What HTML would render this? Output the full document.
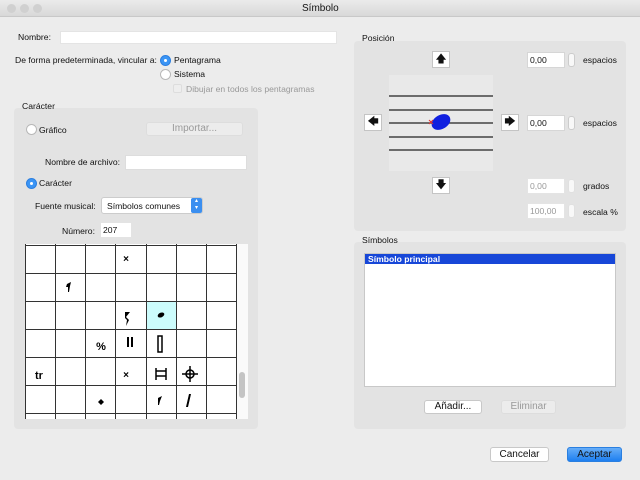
<!DOCTYPE html>
<html><head><style>
*{margin:0;padding:0;box-sizing:border-box}
body{width:640px;height:480px;background:#ececec;font-family:"Liberation Sans",sans-serif;font-size:8.6px;color:#111;position:relative;overflow:hidden}
.a{position:absolute}
.t{position:absolute;white-space:nowrap;line-height:10px}
.inp{position:absolute;background:#fff;border:1px solid #d6d6d6}
.rad{position:absolute;width:11px;height:11px;border-radius:50%;background:#fff;border:1px solid #b8b8b8}
.rad.on{background:#3b95f5;border-color:#2c7fe0}
.rad.on:after{content:"";position:absolute;left:3px;top:3px;width:3px;height:3px;border-radius:50%;background:#fff}
.btn{position:absolute;background:#fff;border:1px solid #c8c8c8;border-radius:3px;text-align:center;line-height:12px;font-size:10px}
.box{position:absolute;background:#e3e3e3;border-radius:4px}
.ab{position:absolute;width:18px;height:17px;background:#fff;border:1px solid #c4c4c4;font-size:11px;text-align:center;line-height:15px}
.step{position:absolute;width:7px;height:14px;border:1px solid #ccc;border-radius:3px;background:#f8f8f8}
.g{color:#999}
</style></head><body>
<div class="a" style="left:0;top:0;width:640px;height:17px;background:linear-gradient(#ebebeb,#d8d8d8);border-bottom:1px solid #c8c8c8"></div>
<div class="a" style="left:7px;top:4px;width:9px;height:9px;border-radius:50%;background:#d0d0d0"></div>
<div class="a" style="left:20px;top:4px;width:9px;height:9px;border-radius:50%;background:#d0d0d0"></div>
<div class="a" style="left:33px;top:4px;width:9px;height:9px;border-radius:50%;background:#d0d0d0"></div>
<div class="t" style="left:302px;top:4px;font-size:10px">Símbolo</div>

<div class="t" style="left:18px;top:32px">Nombre:</div>
<div class="inp" style="left:60px;top:31px;width:277px;height:13px;border-color:#e4e4e4"></div>
<div class="t" style="left:15px;top:55px">De forma predeterminada, vincular a:</div>
<div class="rad on" style="left:160px;top:55px"></div><div class="t" style="left:174px;top:55px">Pentagrama</div>
<div class="rad" style="left:160px;top:69px"></div><div class="t" style="left:174px;top:69px">Sistema</div>
<div class="a" style="left:173px;top:84px;width:9px;height:9px;border:1px solid #ddd;border-radius:2px;background:#eee"></div>
<div class="t g" style="left:186px;top:84px">Dibujar en todos los pentagramas</div>

<div class="box" style="left:14px;top:108px;width:244px;height:321px"></div>
<div class="t" style="left:22px;top:101px">Carácter</div>
<div class="rad" style="left:26px;top:124px"></div><div class="t" style="left:39px;top:125px">Gráfico</div>
<div class="btn g" style="left:146px;top:122px;width:97px;height:14px;background:#ececec;border-color:#ddd">Importar...</div>
<div class="t" style="left:45px;top:157px">Nombre de archivo:</div>
<div class="inp" style="left:125px;top:155px;width:122px;height:15px;border-color:#ddd"></div>
<div class="rad on" style="left:26px;top:178px"></div><div class="t" style="left:39px;top:178px">Carácter</div>
<div class="t" style="left:35px;top:201px">Fuente musical:</div>
<div class="a" style="left:101px;top:197px;width:102px;height:17px;background:#fff;border:1px solid #ccc;border-radius:3px"></div>
<div class="t" style="left:107px;top:201px">Símbolos comunes</div>
<div class="a" style="left:191px;top:198px;width:11px;height:15px;background:#3b8ff0;border-radius:2px;color:#fff;font-size:6px;line-height:7px;text-align:center">▴<br>▾</div>
<div class="t" style="left:62px;top:226px">Número:</div>
<div class="inp" style="left:101px;top:223px;width:30px;height:14px;border:none;padding-left:2px;line-height:14px">207</div>

<svg class="a" style="left:25px;top:244px" width="223" height="175">
<rect x="0" y="0" width="223" height="175" fill="#fff"/>
<rect x="211" y="0" width="12" height="175" fill="#fafafa"/>
<rect x="214" y="128" width="6" height="26" rx="3" fill="#c4c4c4"/>
<rect x="121" y="57" width="30" height="28" fill="#ccfcfc"/>
<g stroke="#333" stroke-width="1">
<path d="M0.5 0V175M30.5 0V175M60.5 0V175M90.5 0V175M121.5 0V175M151.5 0V175M181.5 0V175M211.5 0V175"/>
<path d="M0 1.5H211M0 29.5H211M0 57.5H211M0 85.5H211M0 113.5H211M0 141.5H211M0 169.5H211"/>
</g>
<g fill="#000" font-family="Liberation Sans" font-weight="bold">
<text x="101" y="18" font-size="10" text-anchor="middle">×</text>
<path d="M42 40 L46 38 L45 42 L44 48 L43 48 L43 43 L41 43Z"/>
<path d="M100 68 L105 68 L101 73 L104 76 L101 82 L102 76 L100 74Z"/>
<ellipse cx="136" cy="71" rx="3.5" ry="2.3" transform="rotate(-25 136 71)"/>
<text x="76" y="106" font-size="11" text-anchor="middle">%</text>
<rect x="102" y="93" width="2" height="10"/><rect x="106" y="93" width="2" height="10"/>
<rect x="133" y="92" width="4" height="16" fill="none" stroke="#000" stroke-width="1.5"/>
<text x="101" y="134" font-size="10" text-anchor="middle">×</text>
<path d="M131 124V136M141 124V136M131 127H141M131 132H141" stroke="#000" stroke-width="1.5" fill="none"/>
<circle cx="165" cy="130" r="4" fill="none" stroke="#000" stroke-width="1.5"/><path d="M165 122V138M157 130H173" stroke="#000" stroke-width="1.5"/>
<text x="14" y="135" font-size="11" text-anchor="middle">tr</text>
<path d="M73 158 L76 155 L79 158 L76 161Z"/>
<path d="M133 154 L137 152 L135 157 L134 161 L133 161 L133 157Z"/>
<path d="M164 150 L166 150 L163 163 L161 163Z"/>
</g>
</svg>

<div class="box" style="left:354px;top:41px;width:272px;height:190px"></div>
<div class="t" style="left:362px;top:33px">Posición</div>
<div class="ab" style="left:432px;top:51px">🡅</div>
<div class="ab" style="left:364px;top:114px">🡄</div>
<div class="ab" style="left:501px;top:114px">🡆</div>
<div class="ab" style="left:432px;top:177px">🡇</div>
<svg class="a" style="left:389px;top:75px" width="104" height="96">
<rect width="104" height="96" fill="#e9e9e9"/>
<g stroke="#222" stroke-width="1.3"><path d="M0 21H104M0 35H104M0 48H104M0 62H104M0 75H104"/></g>
<ellipse cx="52" cy="47" rx="10" ry="7" transform="rotate(-30 52 47)" fill="#1020e0"/>
<path d="M40 45L44 49M44 45L40 49" stroke="#e03030" stroke-width="1"/>
</svg>
<div class="inp" style="left:527px;top:52px;width:38px;height:16px;padding-left:2px;line-height:14px">0,00</div><div class="step" style="left:568px;top:53px"></div><div class="t" style="left:583px;top:55px">espacios</div>
<div class="inp" style="left:527px;top:115px;width:38px;height:16px;padding-left:2px;line-height:14px">0,00</div><div class="step" style="left:568px;top:116px"></div><div class="t" style="left:583px;top:118px">espacios</div>
<div class="inp g" style="left:527px;top:178px;width:38px;height:16px;padding-left:2px;line-height:14px;border-color:#e4e4e4">0,00</div><div class="step" style="left:568px;top:179px;border-color:#e0e0e0"></div><div class="t" style="left:583px;top:181px">grados</div>
<div class="inp g" style="left:527px;top:203px;width:38px;height:16px;padding-left:2px;line-height:14px;border-color:#e4e4e4">100,00</div><div class="step" style="left:568px;top:204px;border-color:#e0e0e0"></div><div class="t" style="left:583px;top:207px">escala %</div>

<div class="box" style="left:354px;top:242px;width:272px;height:187px"></div>
<div class="t" style="left:362px;top:235px">Símbolos</div>
<div class="inp" style="left:364px;top:253px;width:252px;height:134px;border-color:#c8c8c8"></div>
<div class="a" style="left:365px;top:254px;width:250px;height:10px;background:#1747d8"></div>
<div class="t" style="left:368px;top:254px;color:#fff;font-weight:bold">Símbolo principal</div>
<div class="btn" style="left:424px;top:400px;width:58px;height:14px">Añadir...</div>
<div class="btn g" style="left:501px;top:400px;width:55px;height:14px;background:#ececec;border-color:#ddd">Eliminar</div>

<div class="btn" style="left:490px;top:447px;width:59px;height:15px;line-height:13px">Cancelar</div>
<div class="btn" style="left:567px;top:447px;width:55px;height:15px;line-height:13px;background:linear-gradient(#66adf8,#1e7ff0);border-color:#2a7fe0;color:#111">Aceptar</div>
</body></html>
